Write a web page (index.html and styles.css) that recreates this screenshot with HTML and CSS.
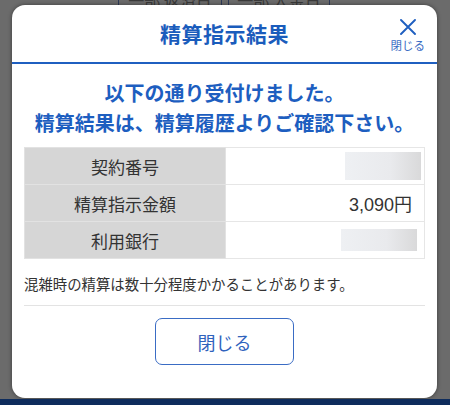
FILE: index.html
```html
<!DOCTYPE html>
<html lang="ja">
<head>
<meta charset="utf-8">
<title>精算指示結果</title>
<link rel="stylesheet" href="styles.css">
</head>
<body>
<div class="screen">
  <div class="behind">
    <div class="behind-box"><span>一部 返済日</span></div>
    <div class="behind-box second"><span>一部 入金日</span></div>
  </div>
  <div class="modal">
    <div class="modal-header">
      <div class="spacer"></div>
      <h1 class="title">精算指示結果</h1>
      <button class="close" type="button">
        <svg class="close-icon" viewBox="0 0 16 16" width="16" height="16" aria-hidden="true">
          <path d="M1 1 L15 15 M15 1 L1 15" stroke="#1f5fc0" stroke-width="1.9" fill="none" stroke-linecap="round"/>
        </svg>
        <span class="close-label">閉じる</span>
      </button>
    </div>
    <div class="modal-body">
      <p class="message">以下の通り受付けました。<br>精算結果は、精算履歴よりご確認下さい。</p>
      <table class="result">
        <tr>
          <th>契約番号</th>
          <td><span class="mask mask-a"></span></td>
        </tr>
        <tr>
          <th>精算指示金額</th>
          <td class="amount">3,090円</td>
        </tr>
        <tr>
          <th>利用銀行</th>
          <td><span class="mask mask-b"></span></td>
        </tr>
      </table>
      <p class="note">混雑時の精算は数十分程度かかることがあります。</p>
      <div class="actions">
        <button class="btn" type="button">閉じる</button>
      </div>
    </div>
  </div>
  <div class="navbar"></div>
</div>
</body>
</html>
```

FILE: styles.css
```css
* { box-sizing: border-box; }
html, body { margin: 0; padding: 0; }
body {
  width: 450px;
  height: 405px;
  overflow: hidden;
  background: #6b6b6b;
  font-family: "Noto Sans CJK JP", "Noto Sans", sans-serif;
}
.screen {
  display: flex;
  flex-direction: column;
  height: 405px;
}
.behind {
  height: 5px;
  overflow: hidden;
  display: flex;
  padding-left: 118px;
  gap: 6px;
  flex-shrink: 0;
}
.behind-box {
  width: 104px;
  height: 5px;
  border-left: 1px solid #2e3a58;
  border-right: 1px solid #2e3a58;
  display: flex;
  align-items: flex-end;
  justify-content: center;
  overflow: hidden;
}
.behind-box.second { width: 102px; }
.behind-box span {
  font-size: 16px;
  line-height: 10px;
  color: #3a3a3a;
  white-space: nowrap;
}
.modal {
  margin: 0 13px 0 12px;
  background: #fff;
  border-radius: 13px;
  box-shadow: 0 0 4px rgba(0,0,0,0.45);
  flex-shrink: 0;
}
.modal-header {
  height: 59px;
  border-bottom: 2px solid #1f5fc0;
  display: grid;
  grid-template-columns: 1fr auto 1fr;
  align-items: center;
  padding: 0 12px;
}
.title {
  margin: 0;
  font-size: 21px;
  font-weight: 700;
  color: #1a5cbc;
  letter-spacing: 0.5px;
  line-height: 30px;
  padding-bottom: 2px;
}
.close {
  justify-self: end;
  background: none;
  border: 0;
  padding: 0;
  display: flex;
  flex-direction: column;
  align-items: center;
  gap: 3px;
  margin-top: 4px;
  cursor: pointer;
}
.close-icon { display: block; }
.close-label {
  font-family: "Noto Sans CJK JP", sans-serif;
  font-size: 11.5px;
  line-height: 14px;
  color: #3a6cc4;
}
.modal-body {
  padding: 14px 12px 33px;
}
.message {
  margin: 0;
  text-align: center;
  font-size: 20px;
  font-weight: 700;
  line-height: 30px;
  color: #1d5ec0;
}
.result {
  margin-top: 9px;
  width: 100%;
  border-collapse: collapse;
  table-layout: fixed;
}
.result th, .result td {
  height: 37px;
  border: 1px solid #e6e6e6;
  padding: 0;
  font-size: 17px;
  color: #333;
}
.result th {
  width: 201px;
  background: #d6d6d6;
  font-weight: 400;
  text-align: center;
  border-color: #e2e2e2;
}
.result td {
  background: #fff;
  text-align: right;
}
.result td.amount {
  padding-right: 12px;
  font-family: "Liberation Sans", "Noto Sans CJK JP", sans-serif;
  font-size: 18px;
}
.mask {
  display: block;
  margin-left: auto;
  width: 76px;
  background: linear-gradient(90deg, #eef0f3 0%, #e9eaed 60%, #d9d9da 100%);
}
.mask-a { height: 28px; margin-right: 3px; }
.mask-b { height: 22px; margin-right: 7px; }
.note {
  margin: 15px 0 0;
  font-size: 14.4px;
  line-height: 20px;
  color: #333;
}
.actions {
  margin-top: 11px;
  border-top: 1px solid #e3e3e3;
  padding-top: 12px;
  display: flex;
  justify-content: center;
}
.btn {
  width: 139px;
  height: 47px;
  border: 1.5px solid #3a6cc4;
  border-radius: 7px;
  background: #fff;
  font-family: "Noto Sans CJK JP", sans-serif;
  font-size: 18px;
  color: #2f63bd;
  cursor: pointer;
}
.navbar {
  margin-top: 1px;
  flex: 1;
  background: #0e2c5c;
}
```
